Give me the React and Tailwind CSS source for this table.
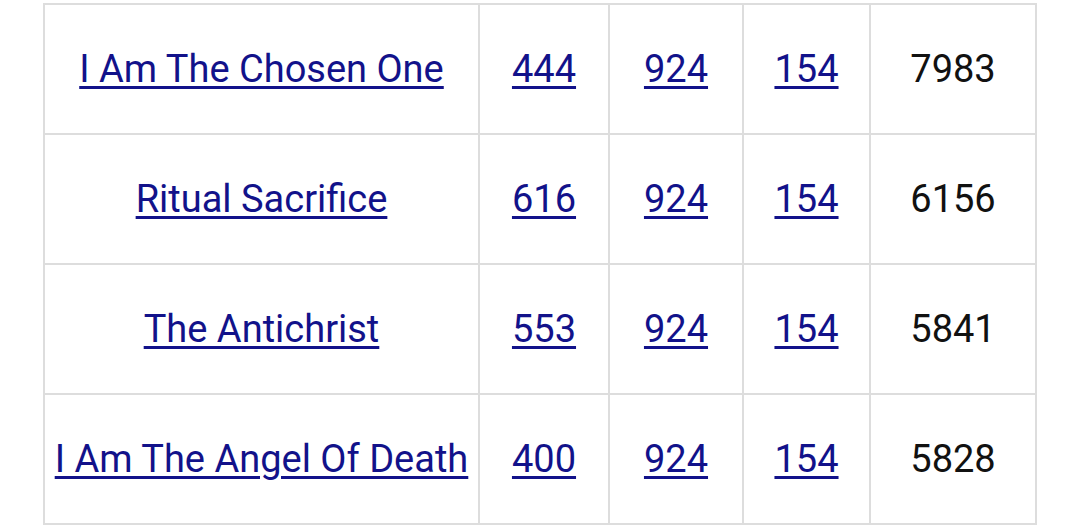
import React from 'react'

const rows = [
  { name: 'I Am The Chosen One', a: 444, b: 924, c: 154, total: 7983 },
  { name: 'Ritual Sacrifice', a: 616, b: 924, c: 154, total: 6156 },
  { name: 'The Antichrist', a: 553, b: 924, c: 154, total: 5841 },
  { name: 'I Am The Angel Of Death', a: 400, b: 924, c: 154, total: 5828 },
]

function Link({ children }) {
  return (
    <a href="#" className="text-[#12128a] underline decoration-[2.5px] underline-offset-[4px]">
      {children}
    </a>
  )
}

function App() {
  return (
    <div className="w-[1080px] h-[526px] overflow-hidden bg-white" style={{ fontFamily: 'Roboto, "Noto Sans", sans-serif' }}>
      <table className="ml-[43px] mt-[3px] border-collapse text-[38px] text-center">
        <colgroup>
          <col className="w-[435px]" />
          <col className="w-[130px]" />
          <col className="w-[134px]" />
          <col className="w-[127px]" />
          <col className="w-[166px]" />
        </colgroup>
        <tbody>
          {rows.map((r) => (
            <tr key={r.name} className="h-[130px]">
              <td className="border-2 border-[#dddddd] p-0 whitespace-nowrap"><Link>{r.name}</Link></td>
              <td className="border-2 border-[#dddddd] p-0"><Link>{r.a}</Link></td>
              <td className="border-2 border-[#dddddd] p-0"><Link>{r.b}</Link></td>
              <td className="border-2 border-[#dddddd] p-0"><Link>{r.c}</Link></td>
              <td className="border-2 border-[#dddddd] p-0 text-[#111111]">{r.total}</td>
            </tr>
          ))}
        </tbody>
      </table>
    </div>
  )
}

export default App
